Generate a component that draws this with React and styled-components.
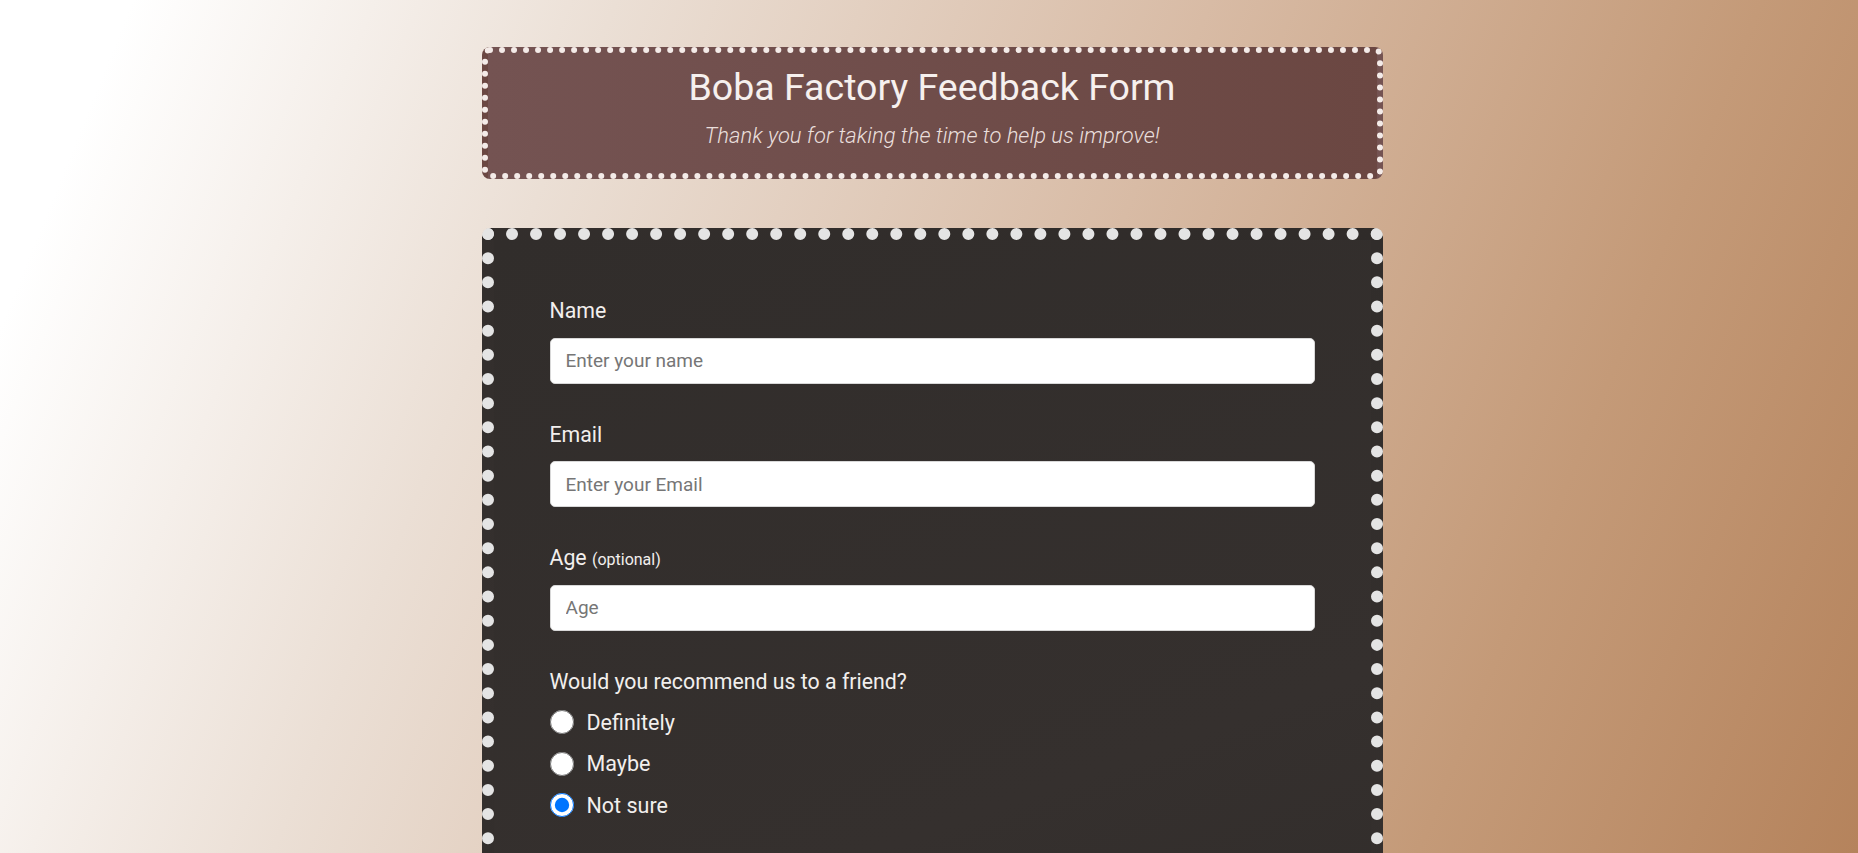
import styled, { createGlobalStyle } from "styled-components";

const GlobalStyle = createGlobalStyle`
  html, body {
    margin: 0;
    padding: 0;
  }
  body {
    font-family: Roboto, "Open Sans", sans-serif;
    background: linear-gradient(112deg, #ffffff 6%, #ebdfd5 28%, #d8bba5 55%, #c49a78 80%, #b5835c 100%);
    background-attachment: fixed;
    min-height: 100vh;
  }
`

const Page = styled.main`
  width: 901px;
  margin: 0 auto;
  padding: 47px 0 60px 6px;
  display: flex;
  flex-direction: column;
  gap: 49px;
`

const Header = styled.header`
  border: 6px dotted #f4ebe8;
  border-radius: 8px;
  background: linear-gradient(90deg, #745352, #6b4742);
  text-align: center;
  padding: 11px 20px 23px;
  color: #f6f0ee;
`

const Title = styled.h1`
  margin: 0;
  font-size: 37.5px;
  font-weight: 400;
  line-height: 46px;
`

const Subtitle = styled.p`
  margin: 12px 0 0;
  font-size: 22px;
  font-weight: 300;
  font-style: italic;
  line-height: 28px;
  color: #eadfdc;
`

const Card = styled.form`
  border: 12px dotted #e4e4e4;
  border-radius: 8px;
  background: linear-gradient(160deg, #312d2b, #35302e 60%, #2f2b29);
  padding: 57px 56px 60px;
  display: flex;
  flex-direction: column;
  gap: 37px;
`

const Field = styled.div`
  display: flex;
  flex-direction: column;
  gap: 12.5px;
`

const Label = styled.label`
  margin: 0;
  font-size: 21.3px;
  line-height: 28px;
  color: #f2efed;

  & small {
    font-size: 16px;
    line-height: 1;
  }
`

const Input = styled.input`
  box-sizing: border-box;
  height: 46px;
  width: 100%;
  border: 1px solid #d8d8d8;
  border-radius: 5px;
  background: #fff;
  padding: 0 15px;
  font-family: inherit;
  font-size: 19px;
  color: #333;

  &::placeholder {
    color: #767676;
  }
`

const Options = styled.div`
  display: flex;
  flex-direction: column;
  margin-top: -6.5px;
`

const Option = styled.label`
  display: flex;
  align-items: center;
  gap: 13px;
  height: 41.5px;
  font-size: 21.5px;
  color: #f2efed;

  & input {
    width: 24px;
    height: 24px;
    margin: 0;
  }
`

const Textarea = styled.textarea`
  box-sizing: border-box;
  height: 120px;
  border-radius: 5px;
  border: 1px solid #d8d8d8;
  padding: 12px 15px;
  font-family: inherit;
  font-size: 19px;
`

const Submit = styled.button`
  height: 50px;
  border: none;
  border-radius: 5px;
  background: #745352;
  color: #fff;
  font-family: inherit;
  font-size: 20px;
`

const answers = ["Definitely", "Maybe", "Not sure"];

export default function App() {
  return (
    <>
      <GlobalStyle />
      <Page>
        <Header>
          <Title>Boba Factory Feedback Form</Title>
          <Subtitle>Thank you for taking the time to help us improve!</Subtitle>
        </Header>

        <Card onSubmit={e => e.preventDefault()}>
          <Field>
            <Label htmlFor="name">Name</Label>
            <Input id="name" type="text" placeholder="Enter your name" />
          </Field>
          <Field>
            <Label htmlFor="email">Email</Label>
            <Input id="email" type="email" placeholder="Enter your Email" />
          </Field>
          <Field>
            <Label htmlFor="age">Age <small>(optional)</small></Label>
            <Input id="age" type="number" placeholder="Age" />
          </Field>
          <Field>
            <Label as="p">Would you recommend us to a friend?</Label>
            <Options>
              {answers.map(a => (
                <Option key={a}>
                  <input type="radio" name="recommend" defaultChecked={a === "Not sure"} />
                  {a}
                </Option>
              ))}
            </Options>
          </Field>
          <Field>
            <Label htmlFor="comments">Any comments or suggestions?</Label>
            <Textarea id="comments" placeholder="Enter your comment here..." />
          </Field>
          <Submit type="submit">Submit</Submit>
        </Card>
      </Page>
    </>
  );
}
